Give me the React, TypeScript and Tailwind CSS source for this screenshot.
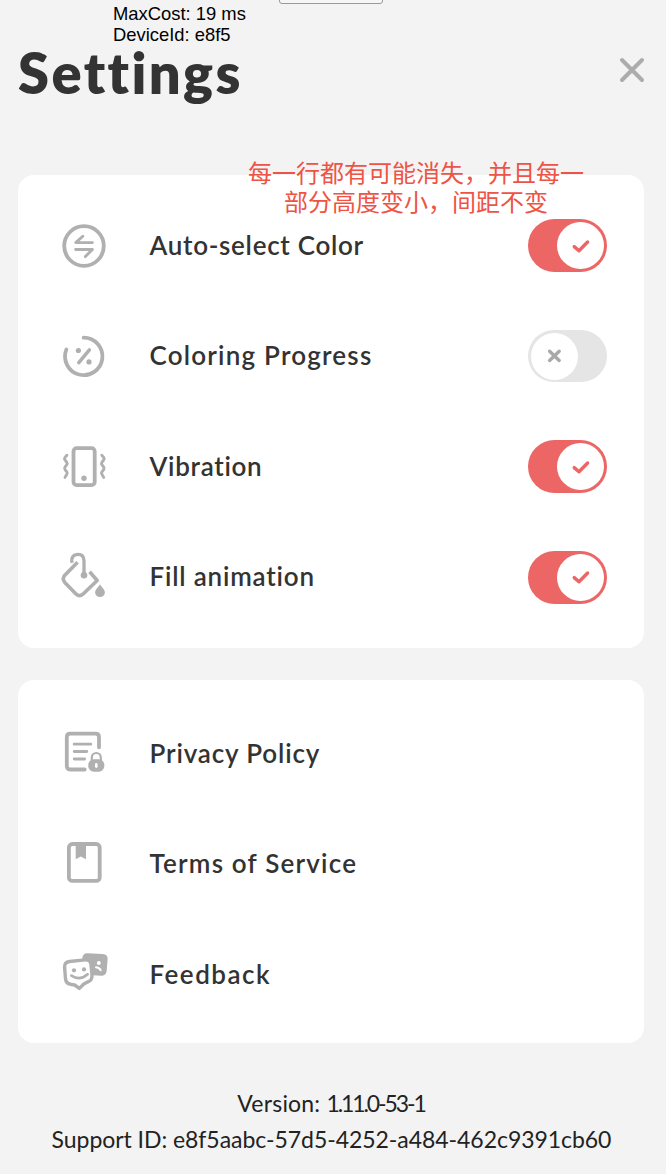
import type { ReactNode } from "react";

const GRAY = "#b0b0b0";

function Icon({ children }: { children: ReactNode }) {
  return (
    <svg
      viewBox="0 0 48 48"
      className="h-12 w-12 shrink-0 overflow-visible"
      fill="none"
      stroke={GRAY}
      strokeWidth={3.8}
      strokeLinecap="round"
      strokeLinejoin="round"
    >
      {children}
    </svg>
  );
}

const AutoSelectIcon = () => (
  <Icon>
    <circle cx="24" cy="24" r="19.8" />
    <path d="M22.8 14.2 15.8 20.6H32.4M15.6 27.5H32.4L25.4 34.6" strokeWidth={2.9} />
  </Icon>
);

const ProgressIcon = () => (
  <Icon>
    <path d="M23.7 5.7A18.7 18.7 0 1 1 6.4 17.4" />
    <path d="M18.8 30.6 29.4 17.8" strokeWidth={3.5} />
    <circle cx="18.4" cy="18.5" r="2.6" fill={GRAY} stroke="none" />
    <circle cx="29" cy="29.9" r="2.6" fill={GRAY} stroke="none" />
  </Icon>
);

const VibrationIcon = () => (
  <Icon>
    <rect x="13.5" y="5.2" width="21.2" height="36.9" rx="3.2" />
    <circle cx="24" cy="35.2" r="2.7" fill={GRAY} stroke="none" />
    <path d="M6.9 12.2 5 14.4Q4.1 15.7 5 16.8L6.8 19.3Q7.6 20.6 6.8 21.7L5 24.1Q4.1 25.4 5 26.6L6.8 28.9Q7.6 30 6.8 31.2L5 34.4" strokeWidth={2.9} />
    <path d="M41.8 12.2 43.7 14.4Q44.6 15.7 43.7 16.8L41.9 19.3Q41.1 20.6 41.9 21.7L43.7 24.1Q44.6 25.4 43.7 26.6L41.9 28.9Q41.1 30 41.9 31.2L43.7 34.4" strokeWidth={2.9} />
  </Icon>
);

const FillIcon = () => (
  <Icon>
    <path
      d="M17.6 9.2 4.8 22.2Q1.8 25.9 4.8 29.4L16.2 41.2Q19.5 44 22.9 41.2L37.2 27.5 29.6 18.7"
      strokeWidth={3.6}
      strokeLinecap="butt"
    />
    <path
      d="M12.1 9.8C10.8 4.4 13.7 1.3 18 1.3 22 1.3 24 4 24 8V22"
      strokeWidth={3.3}
      strokeLinecap="butt"
    />
    <circle cx="24" cy="22.3" r="3.3" fill={GRAY} stroke="none" />
    <path
      d="M40 31.2C41.4 34 44.9 36.5 44.9 39.4A4.9 4.7 0 0 1 35.1 39.4C35.1 36.5 38.6 34 40 31.2Z"
      fill={GRAY}
      stroke="none"
    />
  </Icon>
);

const PrivacyIcon = () => (
  <Icon>
    <path d="M24.7 41.5H10.2Q6.8 41.5 6.8 38V9Q6.8 5.6 10.2 5.6H35.6Q39 5.6 39 9V19.3" />
    <path d="M14.2 16.2H30.8M14.2 23.5H26.8M14.2 31H24.6" strokeWidth={2.8} />
    <path d="M31.8 33V29.5A4.5 4.5 0 0 1 40.8 29.5V33" strokeWidth={2.2} />
    <rect x="28.3" y="31.3" width="16" height="12.4" rx="5.4" fill={GRAY} stroke="none" />
    <path d="M36.3 36.2V38.6" stroke="#fff" strokeWidth={2.6} />
  </Icon>
);

const TermsIcon = () => (
  <Icon>
    <rect x="8.9" y="5" width="30.8" height="36.8" rx="3.4" />
    <path d="M15.7 5H26V20.2L20.8 17.4 15.7 20.2Z" fill={GRAY} stroke="none" />
  </Icon>
);

const FeedbackIcon = () => (
  <Icon>
    <path
      d="M22.2 10Q22.4 4.2 27.5 4.3L42.6 5Q48 5.4 47.6 10.2L46.7 21.6Q46.2 26.9 41 26.8L33 26.2Z"
      fill={GRAY}
      stroke="none"
    />
    <path
      d="M9.4 12.5 25.2 10.9Q30.5 10.6 31 15.6L32 26.4Q32.2 31.6 27.6 33L23.8 35 19.4 39.4 14.6 36 10.6 35.3Q6 34.6 5.5 29.8L4.6 18.2Q4.4 13.1 9.4 12.5Z"
      fill="#fff"
      strokeWidth={3.4}
    />
    <circle cx="14" cy="21.3" r="2.1" fill={GRAY} stroke="none" />
    <circle cx="24" cy="20.4" r="2.1" fill={GRAY} stroke="none" />
    <path d="M11.4 26.6Q20 32.2 27.6 25.2" strokeWidth={2.7} />
    <circle cx="38.8" cy="14" r="2" fill="#fff" stroke="none" />
    <path d="M36 18.2Q39.2 18.4 40.7 21.2" stroke="#fff" strokeWidth={2} />
  </Icon>
);

function Toggle({ on }: { on: boolean }) {
  return (
    <span
      role="switch"
      aria-checked={on}
      className={
        on
          ? "flex h-[53px] w-[79px] items-center justify-end rounded-full bg-[#ed6666] px-[3px]"
          : "flex h-[52px] w-[79px] items-center justify-start rounded-full bg-[#e5e5e5] px-[3px]"
      }
    >
      <span className="flex h-[47px] w-[47px] items-center justify-center rounded-full bg-white">
        <svg
          viewBox="0 0 20 20"
          className="h-5 w-5"
          fill="none"
          strokeWidth={3.4}
          strokeLinecap="round"
          strokeLinejoin="round"
        >
          {on ? (
            <path d="M3.2 10.6 8 14.8 16.6 6" stroke="#ed6666" />
          ) : (
            <path d="M4.6 5.2 14.2 14.4M14.2 5.2 4.6 14.4" stroke="#a9a9a9" />
          )}
        </svg>
      </span>
    </span>
  );
}

type RowProps = { icon: ReactNode; label: string; textStyle: string; on?: boolean };

function Row({ icon, label, textStyle, on }: RowProps) {
  return (
    <div className="flex h-[110.5px] items-center pr-[37px] pl-[42px]">
      {icon}
      <span className={`ml-[41.5px] flex-1 text-[26px] leading-8 font-semibold whitespace-nowrap ${textStyle}`}>
        {label}
      </span>
      {on !== undefined && <Toggle on={on} />}
    </div>
  );
}

export default function App() {
  return (
    <main className="relative flex h-[1174px] w-[666px] flex-col overflow-hidden bg-[#f3f3f3] font-['Lato','Noto_Sans_CJK_SC',sans-serif] text-[#333333] [font-variant-ligatures:none]">
      <div className="absolute -top-4 left-[279px] h-5 w-[104px] rounded-[3px] border border-[#999999] bg-[#f6f6f6]" />
      <div className="absolute top-[3px] left-[113px] font-['Liberation_Sans',sans-serif] text-[18.4px] leading-[21px] whitespace-nowrap text-black">
        <p>MaxCost: 19 ms</p>
        <p>DeviceId: e8f5</p>
      </div>

      <header className="flex h-[175px] items-start justify-between pt-[37px] pr-[19px] pl-[18px]">
        <h1 className="text-[56px] leading-[72px] font-extrabold tracking-[2.4px]">Settings</h1>
        <button aria-label="Close" className="mt-[18px] h-[30px] w-[30px]">
          <svg viewBox="0 0 30 30" className="h-full w-full" fill="none" stroke="#acacac" strokeWidth={4} strokeLinecap="round">
            <path d="M5 5 25 25M25 5 5 25" />
          </svg>
        </button>
      </header>

      <section className="ml-[18px] h-[473px] w-[626px] rounded-2xl bg-white pt-[15.5px]">
        <Row icon={<AutoSelectIcon />} label="Auto-select Color" textStyle="pb-0.5 tracking-[0.7px]" on={true} />
        <Row icon={<ProgressIcon />} label="Coloring Progress" textStyle="pb-0.5 tracking-[1.2px]" on={false} />
        <Row icon={<VibrationIcon />} label="Vibration" textStyle="pb-0.5 tracking-[0.7px]" on={true} />
        <Row icon={<FillIcon />} label="Fill animation" textStyle="pb-0.5 tracking-[0.8px]" on={true} />
      </section>

      <section className="mt-8 ml-[18px] h-[363px] w-[626px] rounded-2xl bg-white pt-[17px]">
        <Row icon={<PrivacyIcon />} label="Privacy Policy" textStyle="pt-px tracking-[0.85px]" />
        <Row icon={<TermsIcon />} label="Terms of Service" textStyle="pt-px tracking-[1.2px]" />
        <Row icon={<FeedbackIcon />} label="Feedback" textStyle="pt-px tracking-[1.5px]" />
      </section>

      <footer className="mt-[42px] flex flex-col items-center text-[23px] leading-9 whitespace-nowrap text-[#222222]">
        <p className="-ml-1">
          <span className="tracking-[0.2px]">Version: </span>
          <span className="tracking-[-2.1px]">1.11.0-53-1</span>
        </p>
        <p className="-ml-[3px] tracking-[-0.05px]">Support ID: e8f5aabc-57d5-4252-a484-462c9391cb60</p>
      </footer>

      <p
        lang="zh-CN"
        className="absolute top-[157px] left-[236px] w-[360px] text-center font-['Noto_Sans_CJK_SC',sans-serif] text-[24px] leading-[29px] font-normal whitespace-nowrap text-[#ee5345]"
      >
        每一行都有可能消失，并且每一
        <br />
        部分高度变小，间距不变
      </p>
    </main>
  );
}
